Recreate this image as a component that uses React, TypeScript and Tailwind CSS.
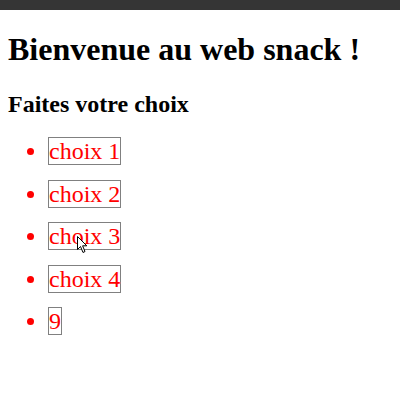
const choices = ['choix 1', 'choix 2', 'choix 3', 'choix 4', '9']

export default function App() {
  return (
    <div className="relative min-h-[400px] bg-white font-['Liberation_Serif',serif] text-black">
      <div className="h-[10px] bg-[#353535]" />
      <div className="px-2">
        <h1 className="pt-[21px] pb-[22px] text-[32px] font-bold leading-[37px]">Bienvenue au web snack !</h1>
        <h2 className="text-[24px] font-bold leading-[28px]">Faites votre choix</h2>
        <ul className="mt-[20px] list-disc pl-10 marker:text-[#ff0000]">
          {choices.map((c) => (
            <li key={c} className="mb-[15px] text-[24px] leading-[27.6px] text-[#ff0000]">
              <span className="border border-[#808080]">{c}</span>
            </li>
          ))}
        </ul>
      </div>
      {/* mouse pointer */}
      <svg className="absolute left-[77px] top-[236px]" width="12" height="18" viewBox="0 0 12 18">
        <path d="M0.5 0.5 L0.5 13.5 L3.5 10.5 L6 16.5 L8 15.5 L5.6 9.8 L9.8 9.8 Z" fill="white" stroke="black" strokeWidth="1" strokeLinejoin="round" />
      </svg>
    </div>
  )
}
